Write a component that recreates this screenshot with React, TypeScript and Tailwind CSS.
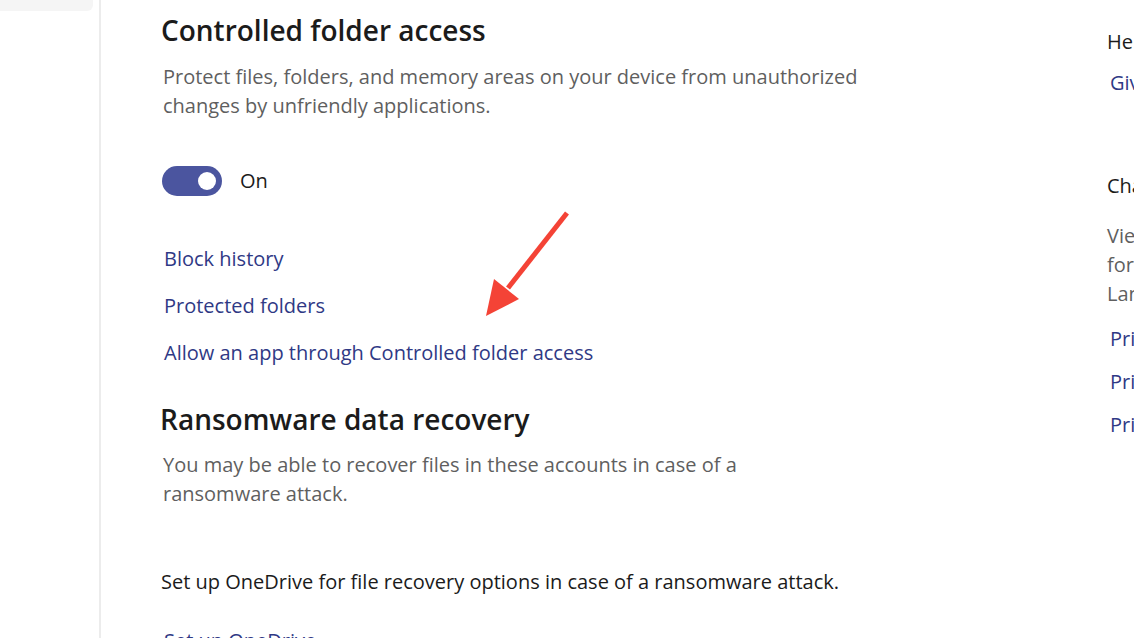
export default function App() {
  const font = { fontFamily: '"Open Sans", "Noto Sans", sans-serif' }
  return (
    <div className="w-[1134px] h-[638px] overflow-hidden bg-white flex relative" style={font}>
      {/* left nav */}
      <div className="w-[101px] shrink-0 border-r-2 border-[#ececec]">
        <div className="w-[93px] h-[11px] bg-[#f5f5f5] rounded-br-[6px]" />
      </div>

      {/* main */}
      <div className="w-[1006px] shrink-0 pl-[60px] pt-[11px]">
        <h2 className="text-[28px] leading-[38px] text-[#1b1b1b] font-semibold whitespace-nowrap">Controlled folder access</h2>
        <p className="mt-[13px] pl-[2px] w-[745px] text-[20px] leading-[29px] text-[#5f5f5f]">
          Protect files, folders, and memory areas on your device from unauthorized changes by unfriendly
          applications.
        </p>
        <div className="mt-[46px] pl-[1px] flex items-center gap-[18px]">
          <button type="button" className="w-[60px] h-[30px] rounded-full bg-[#4b559f] flex items-center justify-end pr-[6px]">
            <span className="w-[18px] h-[18px] rounded-full bg-white" />
          </button>
          <span className="text-[20px] text-[#1b1b1b]">On</span>
        </div>
        <div className="mt-[48px] pl-[3px] flex flex-col gap-[18px] text-[20px] leading-[29px] text-[#2f3985]">
          <a>Block history</a>
          <a>Protected folders</a>
          <a>Allow an app through Controlled folder access</a>
        </div>
        <h2 className="mt-[33px] -ml-[1px] text-[28px] leading-[38px] text-[#1b1b1b] font-semibold whitespace-nowrap">Ransomware data recovery</h2>
        <p className="mt-[12px] pl-[2px] w-[640px] text-[20px] leading-[29px] text-[#5f5f5f]">
          You may be able to recover files in these accounts in case of a ransomware attack.
        </p>
        <p className="mt-[59px] text-[20px] leading-[29px] text-[#1b1b1b] whitespace-nowrap">
          Set up OneDrive for file recovery options in case of a ransomware attack.
        </p>
        <a className="block mt-[30px] pl-[3px] text-[20px] leading-[29px] text-[#2f3985]">Set up OneDrive</a>
      </div>

      {/* right column */}
      <div className="flex-1 pt-[27px] whitespace-nowrap text-[20px] leading-[29px]">
        <p className="text-[#1b1b1b]">Help from the web</p>
        <a className="block mt-[12px] pl-[3px] text-[#2f3985]">Give us feedback</a>
        <p className="mt-[74px] text-[#1b1b1b]">Change your privacy settings</p>
        <p className="mt-[21px] text-[#5f5f5f]">View and change privacy settings</p>
        <p className="text-[#5f5f5f]">for your Windows 11 Pro device.</p>
        <p className="text-[#5f5f5f]">Language</p>
        <div className="mt-[16px] pl-[3px] flex flex-col gap-[14px] text-[#2f3985]">
          <a>Privacy settings</a>
          <a>Privacy dashboard</a>
          <a>Privacy Statement</a>
        </div>
      </div>

      {/* annotation arrow */}
      <svg className="absolute left-0 top-0 pointer-events-none" width="1134" height="638">
        <line x1="567" y1="213" x2="508" y2="288" stroke="#f44336" strokeWidth="5" />
        <polygon points="486,316 494,279 519,299" fill="#f44336" />
      </svg>
    </div>
  )
}
